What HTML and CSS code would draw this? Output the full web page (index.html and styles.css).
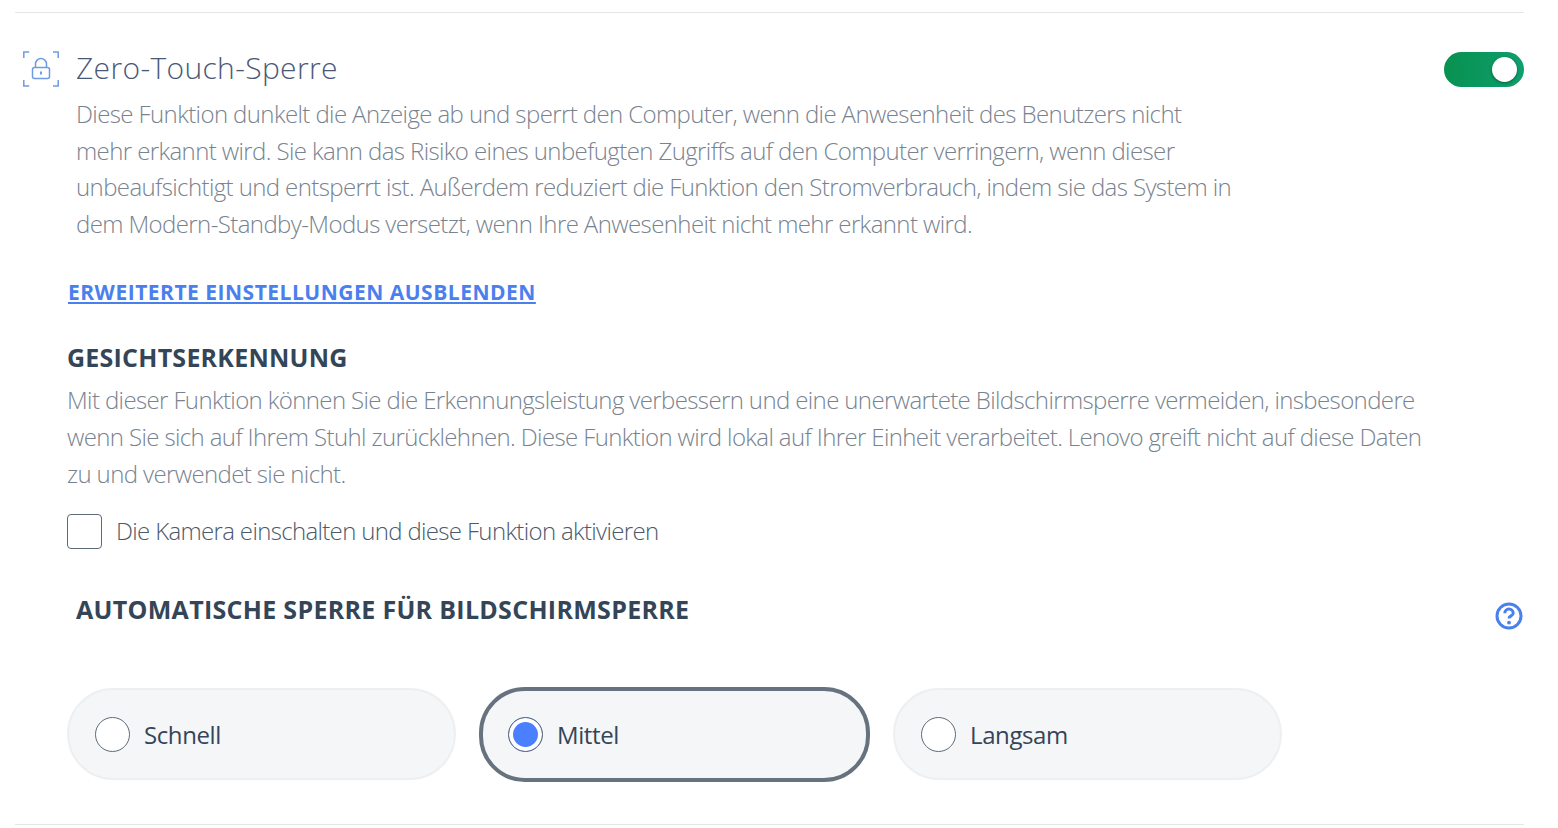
FILE: index.html
```html
<!DOCTYPE html>
<html lang="de">
<head>
  <meta charset="UTF-8">
  <title>Zero-Touch-Sperre</title>
  <link rel="stylesheet" href="styles.css">
</head>
<body>
  <section class="panel">
    <div class="feature-head">
      <svg class="lock-icon" width="36" height="36" viewBox="0 0 36 36" fill="none" stroke="#6f9ae5" stroke-width="1.5">
        <path d="M.8 7V1h5.4M30 1h5.2v6M.8 29v6h5.4M30 35h5.2v-6"/>
        <rect x="9.5" y="16.5" width="17" height="11" rx="2"/>
        <path d="M12.5 16.5v-3.5a5.5 5.5 0 0 1 11 0v3.5"/>
        <path d="M18 20.5v3" stroke-width="2"/>
      </svg>
      <h2 class="feature-title">Zero-Touch-Sperre</h2>
      <div class="toggle"><span class="toggle-knob"></span></div>
    </div>
    <p class="feature-text">Diese Funktion dunkelt die Anzeige ab und sperrt den Computer, wenn die Anwesenheit des Benutzers nicht<br>mehr erkannt wird. Sie kann das Risiko eines unbefugten Zugriffs auf den Computer verringern, wenn dieser<br>unbeaufsichtigt und entsperrt ist. Außerdem reduziert die Funktion den Stromverbrauch, indem sie das System in<br>dem Modern-Standby-Modus versetzt, wenn Ihre Anwesenheit nicht mehr erkannt wird.</p>

    <a class="advanced-link" href="#">ERWEITERTE EINSTELLUNGEN AUSBLENDEN</a>

    <h3 class="sub-title">GESICHTSERKENNUNG</h3>
    <p class="sub-text">Mit dieser Funktion können Sie die Erkennungsleistung verbessern und eine unerwartete Bildschirmsperre vermeiden, insbesondere<br>wenn Sie sich auf Ihrem Stuhl zurücklehnen. Diese Funktion wird lokal auf Ihrer Einheit verarbeitet. Lenovo greift nicht auf diese Daten<br>zu und verwendet sie nicht.</p>
    <label class="check-row"><span class="check-box"></span><span class="check-label">Die Kamera einschalten und diese Funktion aktivieren</span></label>

    <div class="auto-head">
      <h3 class="auto-title">AUTOMATISCHE SPERRE FÜR BILDSCHIRMSPERRE</h3>
      <svg class="help-icon" width="28" height="28" viewBox="0 0 28 28" fill="none" stroke="#4a80ee">
        <circle cx="14" cy="14" r="12" stroke-width="3"/>
        <path d="M9.8 11.2a4.2 4.2 0 0 1 8.4 0c0 2.8-4.2 2.6-4.2 5.2" stroke-width="3"/>
        <circle cx="14" cy="20.6" r="1.9" fill="#4a80ee" stroke="none"/>
      </svg>
    </div>

    <div class="speed-options">
      <div class="speed-pill"><span class="radio"></span><span class="speed-label">Schnell</span></div>
      <div class="speed-pill active"><span class="radio on"></span><span class="speed-label">Mittel</span></div>
      <div class="speed-pill"><span class="radio"></span><span class="speed-label">Langsam</span></div>
    </div>
  </section>
</body>
</html>
```

FILE: styles.css
```css
body {
  margin: 0;
  background-color: white;
  font-family: "Open Sans", "Noto Sans", sans-serif;
  color: #344558;
}

.panel {
  margin: 12px 34px 0 15px;
  height: 813px;
  box-sizing: border-box;
  border-top: 1px solid #e4e6e8;
  border-bottom: 1px solid #e4e6e8;
  padding: 0 0 0 8px;
}

.feature-head {
  display: flex;
  align-items: center;
  height: 36px;
  margin-top: 38px;
}

.lock-icon {
  flex: none;
  margin-right: 17px;
}

.feature-title {
  flex: 1;
  margin: 0 0 4px;
  font-size: 30px;
  font-weight: 300;
  color: #4a5878;
  letter-spacing: 0.35px;
}

.toggle {
  width: 80px;
  height: 35px;
  border-radius: 18px;
  background: linear-gradient(100deg, #08904f, #0ea06e);
  display: flex;
  align-items: center;
  justify-content: flex-end;
  padding-right: 7px;
  box-sizing: border-box;
}

.toggle-knob {
  width: 25px;
  height: 25px;
  border-radius: 50%;
  background-color: white;
  box-shadow: 0 1px 3px rgba(0, 0, 0, 0.4);
}

.feature-text {
  margin: 9px 0 0 53px;
  font-size: 24px;
  font-weight: 300;
  line-height: 36.7px;
  color: #78838f;
  letter-spacing: -0.6px;
  white-space: nowrap;
}

.advanced-link {
  display: inline-block;
  margin: 36px 0 0 45px;
  font-size: 21px;
  font-weight: 700;
  color: #4a80ee;
  line-height: 27px;
  letter-spacing: 0.5px;
  text-decoration: underline;
  text-decoration-thickness: 2px;
  text-underline-offset: 2px;
}

.sub-title {
  margin: 36px 0 0 44px;
  font-size: 25px;
  line-height: 30px;
  font-weight: 700;
  color: #344558;
  letter-spacing: 0.24px;
}

.sub-text {
  margin: 9px 0 0 44px;
  font-size: 24px;
  font-weight: 300;
  line-height: 37px;
  color: #78838f;
  letter-spacing: -0.62px;
  white-space: nowrap;
}

.check-row {
  display: flex;
  align-items: center;
  margin: 22px 0 0 44px;
}

.check-box {
  width: 33px;
  height: 33px;
  border: 1px solid #5e6b78;
  border-radius: 4px;
  margin-right: 14px;
}

.check-label {
  margin-top: -2px;
  font-size: 24px;
  font-weight: 300;
  color: #4b5a6b;
  letter-spacing: -0.66px;
}

.auto-head {
  display: flex;
  justify-content: space-between;
  margin: 43px 0 0 53px;
}

.auto-title {
  margin: 0;
  font-size: 25px;
  line-height: 34px;
  font-weight: 700;
  color: #344558;
  letter-spacing: 0.3px;
}

.help-icon {
  margin-top: 10px;
  margin-right: 1px;
}

.speed-options {
  display: flex;
  align-items: center;
  gap: 23px;
  margin: 57px 0 0 44px;
}

.speed-pill {
  display: flex;
  align-items: center;
  box-sizing: border-box;
  width: 389px;
  height: 92px;
  padding-left: 26px;
  border: 2px solid #edeff1;
  border-radius: 46px;
  background-color: #f4f6f8;
}

.speed-pill.active {
  border: 4px solid #66727e;
  width: 391px;
  height: 95px;
  padding-left: 25px;
}

.radio {
  box-sizing: border-box;
  width: 35px;
  height: 35px;
  border: 1px solid #5e6b78;
  border-radius: 50%;
  background-color: white;
  margin-right: 14px;
}

.radio.on {
  background-color: #4a80ff;
  box-shadow: inset 0 0 0 4px white;
}

.speed-label {
  font-size: 24px;
  font-weight: 400;
  color: #344558;
  letter-spacing: -0.4px;
}
```
